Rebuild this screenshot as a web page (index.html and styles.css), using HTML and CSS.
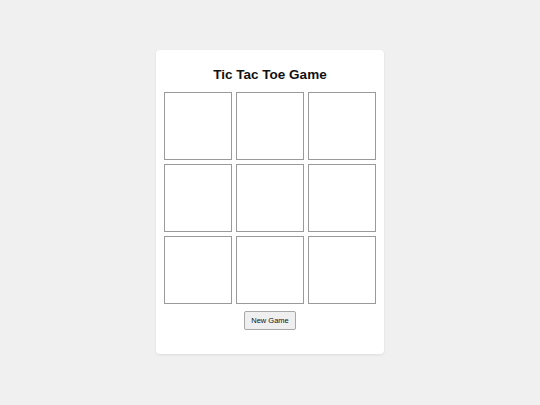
FILE: index.html
```html
<!DOCTYPE html>
<html>
<head>
<meta charset="utf-8">
<link rel="stylesheet" href="styles.css">
</head>
<body>
<div class="card">
  <h1 class="title">Tic Tac Toe Game</h1>
  <div class="board">
    <div class="cell"></div><div class="cell"></div><div class="cell"></div>
    <div class="cell"></div><div class="cell"></div><div class="cell"></div>
    <div class="cell"></div><div class="cell"></div><div class="cell"></div>
  </div>
  <div class="actions"><button class="btn">New Game</button></div>
</div>
</body>
</html>
```
FILE: styles.css
```css
html, body { margin: 0; padding: 0; }
body {
  width: 540px;
  height: 405px;
  box-sizing: border-box;
  padding-top: 50px;
  background: #f0f0f0;
  font-family: "Liberation Sans", Arial, sans-serif;
  display: flex;
  align-items: flex-start;
  justify-content: center;
}
.card {
  width: 212px;
  padding: 0 8px 24px;
  background: #fff;
  border-radius: 4px;
  box-shadow: 0 1px 3px rgba(0,0,0,0.08);
}
.title {
  margin: 0;
  height: 42px;
  line-height: 50px;
  font-size: 13.5px;
  font-weight: bold;
  text-align: center;
  color: #111;
}
.board {
  display: grid;
  grid-template-columns: repeat(3, 68px);
  grid-auto-rows: 68px;
  gap: 4px;
}
.cell {
  border: 1px solid #9a9a9a;
  background: #fff;
}
.actions {
  display: flex;
  justify-content: center;
  padding-top: 7px;
}
.btn {
  height: 19px;
  width: 52px;
  padding: 0;
  font-family: "Liberation Sans", Arial, sans-serif;
  font-size: 7.5px;
  color: #111;
  background: #efefef;
  border: 1px solid #a8a8a8;
  border-radius: 2px;
}
```
